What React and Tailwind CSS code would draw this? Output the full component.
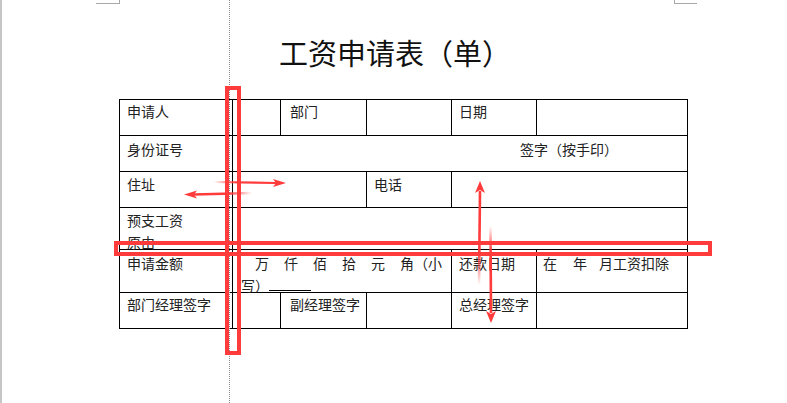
import React from "react";

const RED = "#ff3b3b";

function Cell({ className = "", pad = "pl-[7px]", children }) {
  return (
    <div className={"bg-white text-[14px] leading-[22px] text-[#222] whitespace-nowrap " + pad + " " + className}>
      {children}
    </div>
  );
}

function Overlay() {
  return (
    <svg className="pointer-events-none absolute left-0 top-0" width="787" height="403" viewBox="0 0 787 403">
      <defs>
        <linearGradient id="gR" gradientUnits="userSpaceOnUse" x1="214" y1="0" x2="278" y2="0">
          <stop offset="0" stopColor={RED} stopOpacity="0" />
          <stop offset="0.35" stopColor={RED} stopOpacity="1" />
          <stop offset="1" stopColor={RED} stopOpacity="1" />
        </linearGradient>
        <linearGradient id="gL" gradientUnits="userSpaceOnUse" x1="252" y1="0" x2="192" y2="0">
          <stop offset="0" stopColor={RED} stopOpacity="0" />
          <stop offset="0.4" stopColor={RED} stopOpacity="1" />
          <stop offset="1" stopColor={RED} stopOpacity="1" />
        </linearGradient>
        <linearGradient id="gU" gradientUnits="userSpaceOnUse" x1="0" y1="285" x2="0" y2="190">
          <stop offset="0" stopColor={RED} stopOpacity="0" />
          <stop offset="0.35" stopColor={RED} stopOpacity="1" />
          <stop offset="1" stopColor={RED} stopOpacity="1" />
        </linearGradient>
        <linearGradient id="gD" gradientUnits="userSpaceOnUse" x1="0" y1="226" x2="0" y2="313">
          <stop offset="0" stopColor={RED} stopOpacity="0" />
          <stop offset="0.3" stopColor={RED} stopOpacity="1" />
          <stop offset="1" stopColor={RED} stopOpacity="1" />
        </linearGradient>
      </defs>

      {/* page chrome */}
      <rect x="0" y="0" width="2" height="403" fill="#c6c6c6" />
      <line x1="96" y1="3.5" x2="119" y2="3.5" stroke="#a8a8a8" strokeWidth="1" />
      <line x1="119.5" y1="0" x2="119.5" y2="4" stroke="#a8a8a8" strokeWidth="1" />
      <line x1="674" y1="3.5" x2="697" y2="3.5" stroke="#a8a8a8" strokeWidth="1" />
      <line x1="674.5" y1="0" x2="674.5" y2="4" stroke="#a8a8a8" strokeWidth="1" />
      <line x1="229.5" y1="0" x2="229.5" y2="403" stroke="#8a8a8a" strokeWidth="1" strokeDasharray="1 1" />

      {/* red highlight boxes */}
      <rect x="227" y="88" width="12" height="265" fill="none" stroke={RED} strokeWidth="4" />
      <rect x="116" y="243" width="594" height="11" fill="none" stroke={RED} strokeWidth="4" />

      {/* right arrow */}
      <line x1="214" y1="182" x2="276" y2="183" stroke="url(#gR)" strokeWidth="2.2" />
      <polygon points="286,183 273,179 276,183 273,187" fill={RED} />

      {/* left arrow */}
      <line x1="252" y1="193" x2="194" y2="194.5" stroke="url(#gL)" strokeWidth="2.4" />
      <polygon points="184,194.5 197,190.5 194,194.5 197,198.5" fill={RED} />

      {/* up arrow */}
      <line x1="479" y1="285" x2="480" y2="191" stroke="url(#gU)" strokeWidth="2.6" />
      <polygon points="480,181 475,193 480,190 485,193" fill={RED} />

      {/* down arrow */}
      <line x1="490.5" y1="226" x2="491" y2="313" stroke="url(#gD)" strokeWidth="2.6" />
      <polygon points="491,323 486,311 491,314 496,311" fill={RED} />
    </svg>
  );
}

export default function App() {
  return (
    <div
      className="relative h-[403px] w-[787px] overflow-hidden bg-white"
      style={{ fontFamily: '"Noto Sans CJK SC", "Noto Sans", sans-serif' }}
    >
      <div className="pt-[32px] pl-[3px] text-center text-[29px] leading-[40px] text-[#111]">
        工资申请表（单）
      </div>

      <div className="ml-[119px] mt-[27px] grid w-[569px] grid-cols-[112px_47px_85px_84px_84px_150px] grid-rows-[35px_35px_35px_41px_42px_35px] gap-px bg-black p-px">
        {/* row 1 */}
        <Cell>申请人</Cell>
        <Cell />
        <Cell pad="pl-[9px]">部门</Cell>
        <Cell />
        <Cell>日期</Cell>
        <Cell />

        {/* row 2 */}
        <Cell className="pt-[2px]">身份证号</Cell>
        <Cell className="col-span-5 pt-[2px]" pad="pl-[287px]">签字（按手印）</Cell>

        {/* row 3 */}
        <Cell className="pt-[1px]">住址</Cell>
        <Cell className="col-span-2" />
        <Cell className="pt-[1px]">电话</Cell>
        <Cell className="col-span-2" />

        {/* row 4 */}
        <Cell className="pt-[1px]">
          预支工资
          <br />
          原由
        </Cell>
        <Cell className="col-span-5" />

        {/* row 5 */}
        <Cell className="pt-[2px] leading-[20px]">申请金额</Cell>
        <Cell className="col-span-3 pt-[2px] leading-[20px]" pad="pl-[0px]">
          <div className="flex pl-[22px]">
            <span className="w-[29px]">万</span>
            <span className="w-[29px]">仟</span>
            <span className="w-[29px]">佰</span>
            <span className="w-[29px]">拾</span>
            <span className="w-[29px]">元</span>
            <span>角（小</span>
          </div>
          <div className="pl-[8px]">
            写）<span className="inline-block w-[42px] border-b border-black"></span>
          </div>
        </Cell>
        <Cell className="pt-[2px] leading-[20px]">还款日期</Cell>
        <Cell className="pt-[2px] leading-[20px]" pad="pl-[6px]">
          <div className="flex">
            <span>在</span>
            <span className="ml-[16px]">年</span>
            <span className="ml-[12px]">月工资扣除</span>
          </div>
        </Cell>

        {/* row 6 */}
        <Cell>部门经理签字</Cell>
        <Cell />
        <Cell pad="pl-[9px]">副经理签字</Cell>
        <Cell />
        <Cell>总经理签字</Cell>
        <Cell />
      </div>

      <Overlay />
    </div>
  );
}
